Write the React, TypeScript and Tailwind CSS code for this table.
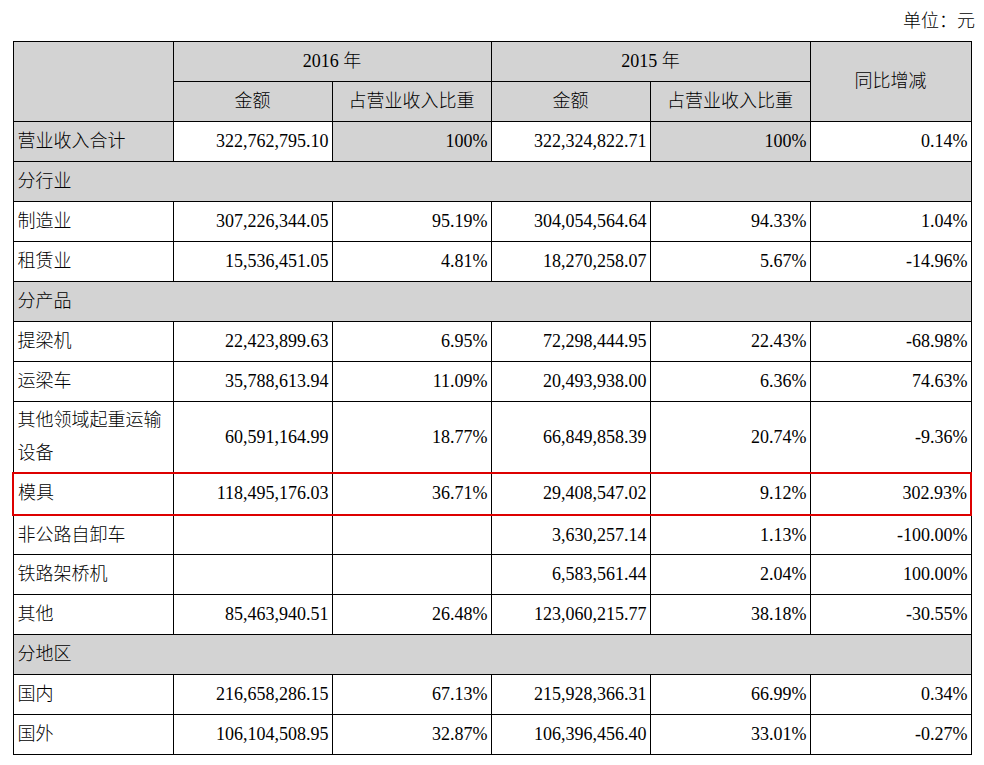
import React from "react";

type Row =
  | { kind: "section"; label: string }
  | { kind: "data"; cells: string[]; total?: boolean; red?: boolean; tall?: boolean };

const rows: Row[] = [
  { kind: "data", total: true, cells: ["营业收入合计", "322,762,795.10", "100%", "322,324,822.71", "100%", "0.14%"] },
  { kind: "section", label: "分行业" },
  { kind: "data", cells: ["制造业", "307,226,344.05", "95.19%", "304,054,564.64", "94.33%", "1.04%"] },
  { kind: "data", cells: ["租赁业", "15,536,451.05", "4.81%", "18,270,258.07", "5.67%", "-14.96%"] },
  { kind: "section", label: "分产品" },
  { kind: "data", cells: ["提梁机", "22,423,899.63", "6.95%", "72,298,444.95", "22.43%", "-68.98%"] },
  { kind: "data", cells: ["运梁车", "35,788,613.94", "11.09%", "20,493,938.00", "6.36%", "74.63%"] },
  { kind: "data", tall: true, cells: ["其他领域起重运输设备", "60,591,164.99", "18.77%", "66,849,858.39", "20.74%", "-9.36%"] },
  { kind: "data", red: true, cells: ["模具", "118,495,176.03", "36.71%", "29,408,547.02", "9.12%", "302.93%"] },
  { kind: "data", cells: ["非公路自卸车", "", "", "3,630,257.14", "1.13%", "-100.00%"] },
  { kind: "data", cells: ["铁路架桥机", "", "", "6,583,561.44", "2.04%", "100.00%"] },
  { kind: "data", cells: ["其他", "85,463,940.51", "26.48%", "123,060,215.77", "38.18%", "-30.55%"] },
  { kind: "section", label: "分地区" },
  { kind: "data", cells: ["国内", "216,658,286.15", "67.13%", "215,928,366.31", "66.99%", "0.34%"] },
  { kind: "data", cells: ["国外", "106,104,508.95", "32.87%", "106,396,456.40", "33.01%", "-0.27%"] },
];

const font = { fontFamily: "'Liberation Serif', 'Noto Sans CJK SC', serif" };

export default function App() {
  return (
    <div className="w-[984px] h-[765px] bg-white text-black text-[18px] font-light" style={font}>
      <div className="h-[41px] flex items-center justify-end pr-[9px] leading-none">单位：元</div>
      <table className="ml-[12px] w-[958px] table-fixed border-collapse">
        <colgroup>
          <col className="w-[160px]" />
          <col className="w-[159px]" />
          <col className="w-[159px]" />
          <col className="w-[159px]" />
          <col className="w-[160px]" />
          <col className="w-[161px]" />
        </colgroup>
        <thead>
          <tr className="h-[40px] bg-[#d3d3d3]">
            <th rowSpan={2} className="border border-black p-0 font-light"></th>
            <th colSpan={2} className="border border-black p-0 font-light text-center">2016 年</th>
            <th colSpan={2} className="border border-black p-0 font-light text-center">2015 年</th>
            <th rowSpan={2} className="border border-black p-0 font-light text-center">同比增减</th>
          </tr>
          <tr className="h-[40px] bg-[#d3d3d3]">
            <th className="border border-black p-0 font-light text-center">金额</th>
            <th className="border border-black p-0 font-light text-center">占营业收入比重</th>
            <th className="border border-black p-0 font-light text-center">金额</th>
            <th className="border border-black p-0 font-light text-center">占营业收入比重</th>
          </tr>
        </thead>
        <tbody>
          {rows.map((r, i) => {
            if (r.kind === "section") {
              return (
                <tr key={i} className="h-[40px] bg-[#d3d3d3]">
                  <td colSpan={6} className="border border-black pl-[4px] py-0">{r.label}</td>
                </tr>
              );
            }
            const red = r.red;
            return (
              <tr key={i} className={r.tall ? "h-[71px]" : red ? "h-[42px]" : "h-[40px]"}>
                {r.cells.map((c, j) => {
                  const gray = j === 0 || (r.total && (j === 2 || j === 4));
                  const base = red
                    ? j === 0
                      ? "border border-black border-t-2 border-b-2 border-l-2 border-t-[#d00] border-b-[#d00] border-l-[#d00]"
                      : j === 5
                      ? "border border-black border-t-2 border-b-2 border-r-2 border-t-[#d00] border-b-[#d00] border-r-[#d00]"
                      : "border border-black border-t-2 border-b-2 border-t-[#d00] border-b-[#d00]"
                    : "border border-black";
                  const bg = r.total && gray ? "bg-[#d3d3d3]" : "bg-white";
                  const align = j === 0 ? "text-left pl-[4px] pr-[2px]" : "text-right pr-[3px] pl-[2px]";
                  return (
                    <td key={j} className={`${base} ${bg} ${align} py-0 ${r.tall && j === 0 ? "leading-[33px]" : "leading-tight"}`}>
                      {c}
                    </td>
                  );
                })}
              </tr>
            );
          })}
        </tbody>
      </table>
    </div>
  );
}
